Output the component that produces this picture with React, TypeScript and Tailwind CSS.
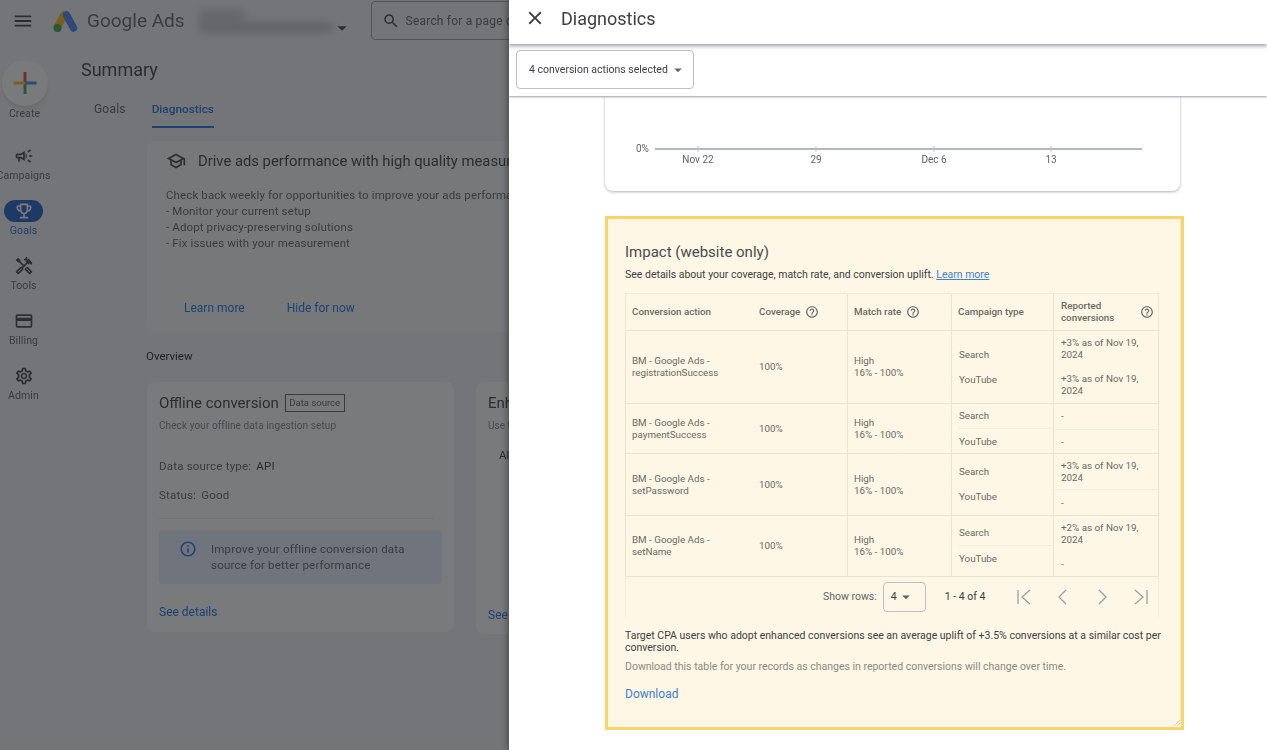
import React from 'react';
import {
  MdMenu,
  MdSearch,
  MdArrowDropDown,
  MdClose,
  MdHelpOutline,
  MdInfoOutline,
  MdOutlineSchool,
  MdOutlineCampaign,
  MdOutlineEmojiEvents,
  MdOutlineHandyman,
  MdOutlineCreditCard,
  MdOutlineSettings,
} from 'react-icons/md';

const navItems = [
  { label: 'Campaigns', icon: MdOutlineCampaign },
  { label: 'Goals', icon: MdOutlineEmojiEvents, active: true },
  { label: 'Tools', icon: MdOutlineHandyman },
  { label: 'Billing', icon: MdOutlineCreditCard },
  { label: 'Admin', icon: MdOutlineSettings },
];

const rows = [
  { name: 'registrationSuccess', h: 'h-[73px]', first: '+3% as of Nov 19, 2024', second: '+3% as of Nov 19, 2024', tall: false },
  { name: 'paymentSuccess', h: 'h-[50px]', first: '-', second: '-', tall: false },
  { name: 'setPassword', h: 'h-[62px]', first: '+3% as of Nov 19, 2024', second: '-', tall: true, line: 'reported' },
  { name: 'setName', h: 'h-[61px]', first: '+2% as of Nov 19, 2024', second: '-', tall: true, line: 'campaign' },
];

const GoogleAdsLogo = () => (
  <svg width="26" height="23" viewBox="0 0 26 23" fill="none">
    <line x1="11" y1="5" x2="4.5" y2="17" stroke="#fbbc04" strokeWidth="7.5" strokeLinecap="round" />
    <line x1="13.5" y1="5" x2="20.5" y2="18" stroke="#4285f4" strokeWidth="7.5" strokeLinecap="round" />
    <circle cx="4.5" cy="18" r="4" fill="#34a853" />
  </svg>
);

const ColorPlus = () => (
  <svg width="24" height="24" viewBox="0 0 24 24">
    <rect x="10.5" y="1" width="3" height="10.5" fill="#ea4335" />
    <rect x="12.5" y="10.5" width="11" height="3" fill="#4285f4" />
    <rect x="10.5" y="12.5" width="3" height="10.5" fill="#34a853" />
    <rect x="0.5" y="10.5" width="11" height="3" fill="#fbbc04" />
  </svg>
);

const Sidebar = () => (
  <div className="w-[49px] shrink-0 flex flex-col items-center pt-[18px]">
    <div className="w-[46px] h-[46px] rounded-full bg-white shadow-md flex items-center justify-center">
      <ColorPlus />
    </div>
    <div className="mt-[1px] h-[14px] text-[10.5px] leading-[14px] tracking-[0.1px] text-[#5f6368]">Create</div>
    <div className="mt-[24px] -ml-[2px] flex flex-col items-center">
      {navItems.map(item => {
        const Icon = item.icon;
        return (
          <div key={item.label} className="h-[55px] w-[49px] flex flex-col items-center">
            <div className={`h-[22px] w-[39px] rounded-full flex items-center justify-center ${item.active ? 'bg-[#1a5fc8] text-white' : 'text-[#3c4043]'}`}>
              <Icon size={20} />
            </div>
            <div className={`mt-[1px] h-[16px] text-[10.5px] leading-[16px] tracking-[0.1px] whitespace-nowrap ${item.active ? 'text-[#1a73e8]' : 'text-[#5f6368]'}`}>{item.label}</div>
          </div>
        );
      })}
    </div>
  </div>
);

const MainContent = () => (
  <div className="flex-1 min-w-0 overflow-hidden">
    <div className="pl-[32px] pt-[18px] text-[18px] leading-[20px] text-[#3c4043]">Summary</div>
    <div className="mt-[21px] pl-[45px] flex gap-[26px] text-[12px] leading-[16px]">
      <div className="tracking-[0.2px] text-[#5f6368]">Goals</div>
      <div className="font-medium text-[#1a73e8] text-[11.8px]">
        Diagnostics
        <div className="h-[2px] bg-[#1a73e8] mt-[9px]" />
      </div>
    </div>
    <div className="ml-[98px] mt-[13px] w-[420px] h-[191px] bg-white/60 rounded-lg pl-[19px] pt-[10px]">
      <div className="flex items-center gap-[12px] h-[20px] whitespace-nowrap">
        <MdOutlineSchool size={20} className="text-[#3c4043]" />
        <div className="text-[14.8px] text-[#3c4043]">Drive ads performance with high quality measurement</div>
      </div>
      <div className="mt-[16px] text-[11.5px] leading-[16px] tracking-[0.12px] text-[#5f6368] whitespace-nowrap">
        <div>Check back weekly for opportunities to improve your ads performance</div>
        <div>- Monitor your current setup</div>
        <div>- Adopt privacy-preserving solutions</div>
        <div>- Fix issues with your measurement</div>
      </div>
      <div className="mt-[49px] ml-[18px] flex gap-[42px] text-[12px] leading-[16px] text-[#1a73e8]">
        <div>Learn more</div>
        <div>Hide for now</div>
      </div>
    </div>
    <div className="ml-[97px] mt-[16px] text-[11.5px] leading-[16px] text-[#202124]">Overview</div>
    <div className="ml-[98px] mt-[18px] flex gap-[22px] items-start">
      <div className="w-[307px] h-[250px] shrink-0 bg-white rounded-lg px-[12px] pt-[12px]">
        <div className="flex items-center gap-[6px] h-[18px]">
          <div className="text-[15px] text-[#3c4043]">Offline conversion</div>
          <div className="border border-[#5f6368] px-[3.5px] text-[9.5px] leading-[16px] text-[#5f6368]">Data source</div>
        </div>
        <div className="mt-[7px] text-[10px] leading-[14px] tracking-[0.1px] text-[#80868b]">Check your offline data ingestion setup</div>
        <div className="mt-[25px] text-[11.5px] leading-[16px] tracking-[0.2px] text-[#5f6368]">
          Data source type: <span className="ml-[2px] text-[#3c4043]">API</span>
        </div>
        <div className="mt-[13px] text-[11.5px] leading-[16px] tracking-[0.2px] text-[#5f6368]">
          Status: <span className="ml-[2px] text-[#5f6368]">Good</span>
        </div>
        <div className="mt-[15px] mr-[8px] h-px bg-[#e8eaed]" />
        <div className="mt-[11px] w-[283px] h-[54px] rounded bg-[#e8f0fe] flex items-center pl-[20px] gap-[14px]">
          <MdInfoOutline size={18} className="text-[#1a73e8] shrink-0 -mt-[17px]" />
          <div className="text-[11.5px] leading-[16px] tracking-[0.2px] text-[#5f6368]">
            Improve your offline conversion data
            <br />
            source for better performance
          </div>
        </div>
        <div className="mt-[20px] text-[12px] leading-[16px] text-[#1a73e8]">See details</div>
      </div>
      <div className="w-[307px] h-[252px] shrink-0 bg-white rounded-lg px-[12px] pt-[12px]">
        <div className="text-[15px] leading-[18px] text-[#3c4043]">Enhanced conversions</div>
        <div className="mt-[7px] text-[10px] leading-[14px] text-[#80868b]">Use first-party data</div>
        <div className="mt-[14px] ml-[11px] text-[11.5px] leading-[16px] text-[#3c4043]">All</div>
        <div className="mt-[144px] text-[12px] leading-[16px] text-[#1a73e8]">See details</div>
      </div>
    </div>
  </div>
);

const LeftPage = () => (
  <div className="relative w-[509px] h-[750px] shrink-0 overflow-hidden bg-[#f1f3f4]">
    <div className="w-[509px] h-full blur-[0.6px]">
      <div className="h-[42px] flex items-center">
        <MdMenu size={22} className="ml-[12px] text-[#3c4043] shrink-0" />
        <div className="ml-[19px] shrink-0"><GoogleAdsLogo /></div>
        <div className="ml-[8px] text-[19px] text-[#5f6368] shrink-0 whitespace-nowrap">Google Ads</div>
        <div className="ml-[14px] w-[133px] shrink-0 flex flex-col gap-[3px] blur-[4px]">
          <div className="h-[9px] w-[46px] bg-[#c4c6c9]" />
          <div className="h-[9px] w-[133px] bg-[#bcbec1]" />
        </div>
        <MdArrowDropDown size={22} className="text-[#3c4043] shrink-0 mt-[13px] -ml-[1px]" />
        <div className="ml-[18px] mt-[-1px] h-[39px] w-[300px] shrink-0 border border-[#9aa0a6] rounded flex items-center pl-[10px] gap-[6px]">
          <MdSearch size={18} className="text-[#3c4043] shrink-0" />
          <div className="w-[104px] overflow-hidden text-[12px] tracking-[0.2px] text-[#5f6368] whitespace-nowrap">Search for a page or</div>
        </div>
      </div>
      <div className="flex">
        <Sidebar />
        <MainContent />
      </div>
    </div>
    {/* scrim over the page behind the drawer */}
    <div className="absolute inset-0 bg-[#202124]/60" />
  </div>
);

const ChartCard = () => (
  <div className="w-[575px] h-[95px] bg-white rounded-b-lg shadow-[0_1px_3px_rgba(60,64,67,0.4)]">
    <svg width="575" height="95" viewBox="0 0 575 95" className="block">
      <text x="31" y="56" fontSize="10" fill="#5f6368">0%</text>
      <line x1="50" y1="53" x2="537" y2="53" stroke="#9aa0a6" strokeWidth="1.5" />
      {[
        { x: 93, label: 'Nov 22' },
        { x: 211, label: '29' },
        { x: 329, label: 'Dec 6' },
        { x: 446, label: '13' },
      ].map(t => (
        <g key={t.label}>
          <line x1={t.x} y1="50" x2={t.x} y2="56" stroke="#bdc1c6" />
          <text x={t.x} y="67" fontSize="10" textAnchor="middle" fill="#5f6368">{t.label}</text>
        </g>
      ))}
    </svg>
  </div>
);

const HelpIcon = () => <MdHelpOutline size={14} className="text-[#5f6368] shrink-0" />;

const ImpactTable = () => (
  <div className="w-[534px] text-[9.8px] leading-[12px] text-[#6a6a64]">
    <div className="grid grid-cols-[133px_88px_104px_102px_107px] h-[38px] border border-b-0 border-[#f0e9d4] font-medium">
      <div className="flex items-center pl-[6px] border-b border-[#e9e3d0]">Conversion action</div>
      <div className="flex items-center border-b border-[#e9e3d0] gap-[5px]">Coverage <HelpIcon /></div>
      <div className="flex items-center pl-[6px] gap-[5px] border-l border-b border-[#e9e3d0]">Match rate <HelpIcon /></div>
      <div className="flex items-center pl-[6px] border-l border-b border-[#e9e3d0]">Campaign type</div>
      <div className="flex items-center justify-between pl-[7px] pr-[6px] border-l border-b border-[#e9e3d0]">
        <span>Reported<br />conversions</span>
        <HelpIcon />
      </div>
    </div>
    {rows.map(row => (
      <div key={row.name} className={`grid grid-cols-[133px_88px_104px_102px_107px] ${row.h} border-x border-b border-[#e9e3d0]`}>
        <div className="flex flex-col justify-center pl-[6px]">
          <div>BM - Google Ads -</div>
          <div>{row.name}</div>
        </div>
        <div className="flex items-center">100%</div>
        <div className="flex flex-col justify-center pl-[6px] border-l border-[#e9e3d0]">
          <div>High</div>
          <div>16% - 100%</div>
        </div>
        <div className="flex flex-col justify-center pl-[7px] border-l border-[#e9e3d0]">
          <div className={`h-[25px] flex items-center ${row.line === 'campaign' || row.name === 'paymentSuccess' ? 'border-b border-[#f3edda]' : ''}`}>Search</div>
          <div className="h-[25px] flex items-center">YouTube</div>
        </div>
        <div className="flex flex-col border-l border-[#e9e3d0]">
          <div className={`${row.tall ? 'h-[36px] shrink-0' : 'flex-1'} flex items-center pl-[7px] pr-[12px] ${row.line === 'reported' || row.name === 'paymentSuccess' ? 'border-b border-[#f3edda]' : ''}`}>
            {row.first}
          </div>
          <div className="flex-1 flex items-center pl-[7px] pr-[12px]">{row.second}</div>
        </div>
      </div>
    ))}
    <div className="h-[40px] border-x border-[#f5eedb] flex items-center pl-[197px] text-[10.5px] text-[#5f6368]">
      <div className="whitespace-nowrap">Show rows:</div>
      <div className="ml-[6px] w-[43px] h-[30px] border border-[#bdc1c6] rounded flex items-center pl-[7px] text-[#3c4043]">
        4 <MdArrowDropDown size={18} className="text-[#5f6368]" />
      </div>
      <div className="ml-[19px] whitespace-nowrap text-[#3c4043]">1 - 4 of 4</div>
      <div className="ml-[30px] flex gap-[21px] text-[#9aa0a6]">
        <svg width="18" height="18" viewBox="0 0 18 18" fill="none" stroke="currentColor" strokeWidth="1.3"><path d="M3 2v14M15 2L7 9l8 7" /></svg>
        <svg width="18" height="18" viewBox="0 0 18 18" fill="none" stroke="currentColor" strokeWidth="1.3"><path d="M12 2L5 9l7 7" /></svg>
        <svg width="18" height="18" viewBox="0 0 18 18" fill="none" stroke="currentColor" strokeWidth="1.3"><path d="M6 2l7 7-7 7" /></svg>
        <svg width="18" height="18" viewBox="0 0 18 18" fill="none" stroke="currentColor" strokeWidth="1.3"><path d="M3 2l8 7-8 7M15 2v14" /></svg>
      </div>
    </div>
  </div>
);

const ImpactPanel = () => (
  <div className="relative mt-[25px] w-[579px] h-[514px] border-[3px] border-[#fbd468] bg-[#fef7e5]">
    <div className="h-full border-r border-[#f3ebd3] pl-[17px]">
      <div className="pt-[24px] text-[15px] leading-[18px] text-[#4a4c4f]">Impact (website only)</div>
      <div className="mt-[7px] text-[10.5px] leading-[14px] text-[#3c4043]">
        See details about your coverage, match rate, and conversion uplift.{' '}
        <span className="text-[#3f7fd6] underline">Learn more</span>
      </div>
      <div className="mt-[11px]"><ImpactTable /></div>
      <div className="mt-[13px] w-[540px] text-[10.5px] leading-[12px] text-[#3c4043]">
        Target CPA users who adopt enhanced conversions see an average uplift of +3.5% conversions at a similar cost per conversion.
      </div>
      <div className="mt-[7px] text-[10.5px] leading-[12px] text-[#8a8a84]">Download this table for your records as changes in reported conversions will change over time.</div>
      <div className="mt-[14px] text-[12px] leading-[14px] text-[#3f7fd6]">Download</div>
    </div>
    <svg width="6" height="6" viewBox="0 0 6 6" className="absolute right-[1px] bottom-[1px]" stroke="#c9c3b0" strokeWidth="0.7">
      <path d="M6 0L0 6M6 3L3 6" />
    </svg>
  </div>
);

const Drawer = () => (
  <div className="relative w-[758px] h-[750px] shrink-0 bg-white flex flex-col overflow-hidden shadow-[-2px_0_6px_rgba(0,0,0,0.35)]">
    <div className="relative z-20 h-[44px] shrink-0 bg-white flex items-center pb-[8px] shadow-[0_2px_4px_rgba(60,64,67,0.5)]">
      <MdClose size={22} className="ml-[15px] text-[#3c4043]" />
      <div className="ml-[15px] text-[18px] text-[#3c4043]">Diagnostics</div>
    </div>
    <div className="relative z-10 h-[52px] shrink-0 bg-white pl-[7px] pt-[6px] shadow-[0_1px_2px_rgba(60,64,67,0.5)]">
      <div className="w-[178px] h-[39px] border border-[#bdc1c6] rounded flex items-center pl-[12px] pt-[1px] gap-[1px] text-[10.5px] text-[#3c4043] whitespace-nowrap">
        4 conversion actions selected
        <MdArrowDropDown size={18} className="text-[#5f6368]" />
      </div>
    </div>
    <div className="flex-1 pl-[96px] overflow-hidden blur-[0.3px]">
      <ChartCard />
      <ImpactPanel />
    </div>
  </div>
);

export default function App() {
  return (
    <div className="flex w-[1267px] h-[750px] overflow-hidden font-['Roboto',sans-serif]">
      <LeftPage />
      <Drawer />
    </div>
  );
}
